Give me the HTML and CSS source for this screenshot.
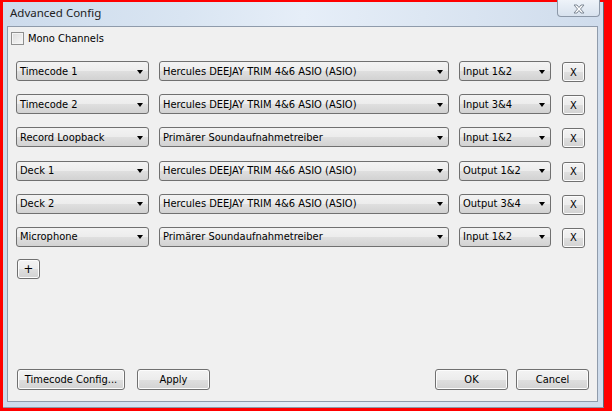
FILE: index.html
```html
<!DOCTYPE html>
<html lang="en">
<head>
    <meta charset="UTF-8">
    <title>Advanced Config</title>
    <link rel="stylesheet" href="styles.css">
</head>
<body>
    <div class="window">
        <div class="titlebar">
            <span class="title">Advanced Config</span>
            <div class="close">
                <svg width="12" height="10" viewBox="0 0 12 10">
                    <polygon points="1,1 4,1 6,3.5 8,1 11,1 7.5,5 11,9 8,9 6,6.5 4,9 1,9 4.5,5" fill="#fff" stroke="#7d8794" stroke-width="1" stroke-linejoin="round"/>
                </svg>
            </div>
        </div>

        <div class="client">
            <label class="check"><span class="box"></span>Mono Channels</label>

            <div class="rows">
                <div class="row">
                    <div class="combo kind"><span>Timecode 1</span><i class="arrow"></i></div>
                    <div class="combo device"><span>Hercules DEEJAY TRIM 4&amp;6 ASIO (ASIO)</span><i class="arrow"></i></div>
                    <div class="combo channel"><span>Input 1&amp;2</span><i class="arrow"></i></div>
                    <button class="btn del">X</button>
                </div>
                <div class="row">
                    <div class="combo kind"><span>Timecode 2</span><i class="arrow"></i></div>
                    <div class="combo device"><span>Hercules DEEJAY TRIM 4&amp;6 ASIO (ASIO)</span><i class="arrow"></i></div>
                    <div class="combo channel"><span>Input 3&amp;4</span><i class="arrow"></i></div>
                    <button class="btn del">X</button>
                </div>
                <div class="row">
                    <div class="combo kind"><span>Record Loopback</span><i class="arrow"></i></div>
                    <div class="combo device"><span>Primärer Soundaufnahmetreiber</span><i class="arrow"></i></div>
                    <div class="combo channel"><span>Input 1&amp;2</span><i class="arrow"></i></div>
                    <button class="btn del">X</button>
                </div>
                <div class="row">
                    <div class="combo kind"><span>Deck 1</span><i class="arrow"></i></div>
                    <div class="combo device"><span>Hercules DEEJAY TRIM 4&amp;6 ASIO (ASIO)</span><i class="arrow"></i></div>
                    <div class="combo channel"><span>Output 1&amp;2</span><i class="arrow"></i></div>
                    <button class="btn del">X</button>
                </div>
                <div class="row">
                    <div class="combo kind"><span>Deck 2</span><i class="arrow"></i></div>
                    <div class="combo device"><span>Hercules DEEJAY TRIM 4&amp;6 ASIO (ASIO)</span><i class="arrow"></i></div>
                    <div class="combo channel"><span>Output 3&amp;4</span><i class="arrow"></i></div>
                    <button class="btn del">X</button>
                </div>
                <div class="row">
                    <div class="combo kind"><span>Microphone</span><i class="arrow"></i></div>
                    <div class="combo device"><span>Primärer Soundaufnahmetreiber</span><i class="arrow"></i></div>
                    <div class="combo channel"><span>Input 1&amp;2</span><i class="arrow"></i></div>
                    <button class="btn del">X</button>
                </div>
            </div>

            <button class="btn add">+</button>

            <div class="footer">
                <button class="btn tc">Timecode Config...</button>
                <button class="btn wide">Apply</button>
                <span class="spacer"></span>
                <button class="btn wide">OK</button>
                <button class="btn wide">Cancel</button>
            </div>
        </div>
    </div>
</body>
</html>
```

FILE: styles.css
```css
* {
    box-sizing: border-box;
}
html, body {
    margin: 0;
    height: 100%;
}
body {
    background: #ff0000;
    overflow: hidden;
    font-family: "DejaVu Sans Condensed", "DejaVu Sans", sans-serif;
    font-size: 11px;
    color: #000;
}
.window {
    margin: 2px 0 0 3px;
    width: 601px;
    height: 406px;
    padding: 0 5px 5px 4px;
    display: flex;
    flex-direction: column;
    background: linear-gradient(to right, #cddbec 0%, #d9e5f2 30%, #e6eef8 50%, #dde7f3 70%, #cfdcec 100%);
    border-right: 1px solid #5f6a76;
    border-bottom: 1px solid #8e9aa8;
}
.titlebar {
    height: 24px;
    display: flex;
    justify-content: space-between;
    align-items: flex-start;
}
.title {
    font-family: "Noto Sans", sans-serif;
    font-size: 11.5px;
    color: #222;
    margin: 3px 0 0 3px;
}
.close {
    width: 43px;
    height: 17px;
    margin: -2px -2px 0 0;
    border: 1px solid #8c98a8;
    border-top: none;
    border-radius: 0 0 4px 4px;
    background: linear-gradient(#eef3f9, #d8e2ee);
    display: flex;
    align-items: center;
    justify-content: center;
    padding-top: 1px;
}
.client {
    flex: 1;
    background: #f0f0f0;
    border: 1px solid #8f9bab;
    padding: 5px 8px 11px 3px;
    display: flex;
    flex-direction: column;
}
.check {
    display: flex;
    align-items: center;
    height: 13px;
}
.box {
    width: 13px;
    height: 13px;
    border: 1px solid #8e8f8f;
    background: linear-gradient(135deg, #dcdcdc, #f8f8f8);
    box-shadow: inset 0 0 0 1px #f4f4f4;
    margin-right: 4px;
}
.rows {
    margin: 16px 0 0 5px;
    display: flex;
    flex-direction: column;
    gap: 13.2px;
}
.row {
    display: flex;
    align-items: flex-start;
    height: 20px;
}
.combo {
    height: 20px;
    border: 1px solid #707070;
    border-radius: 3px;
    background: linear-gradient(#f3f3f3 0%, #ececec 50%, #dfdfdf 51%, #d2d2d2 100%);
    display: flex;
    align-items: center;
    justify-content: space-between;
    padding: 0 5px 0 3px;
    margin-right: 10px;
}
.kind {
    width: 133px;
}
.device {
    width: 290px;
}
.channel {
    width: 92px;
    margin-right: 11px;
}
.arrow {
    width: 0;
    height: 0;
    border-left: 3.5px solid transparent;
    border-right: 3.5px solid transparent;
    border-top: 4px solid #000;
    margin-top: 1px;
}
.btn {
    font: inherit;
    color: #000;
    height: 21px;
    border: 1px solid #707070;
    border-radius: 3px;
    background: linear-gradient(#f3f3f3 0%, #ececec 50%, #dfdfdf 51%, #d2d2d2 100%);
    box-shadow: inset 0 0 0 1px #fcfcfc;
    padding: 0;
    cursor: pointer;
}
.del {
    width: 23px;
    height: 20px;
    margin-top: 1px;
}
.add {
    width: 23px;
    height: 20px;
    margin: 12px 0 0 6px;
    font-size: 13px;
}
.footer {
    margin-top: auto;
    display: flex;
    padding-left: 6px;
}
.tc {
    width: 108px;
    margin-right: 12px;
}
.wide {
    width: 73px;
}
.footer .wide + .wide {
    margin-left: 8px;
}
.spacer {
    flex: 1;
}
```
